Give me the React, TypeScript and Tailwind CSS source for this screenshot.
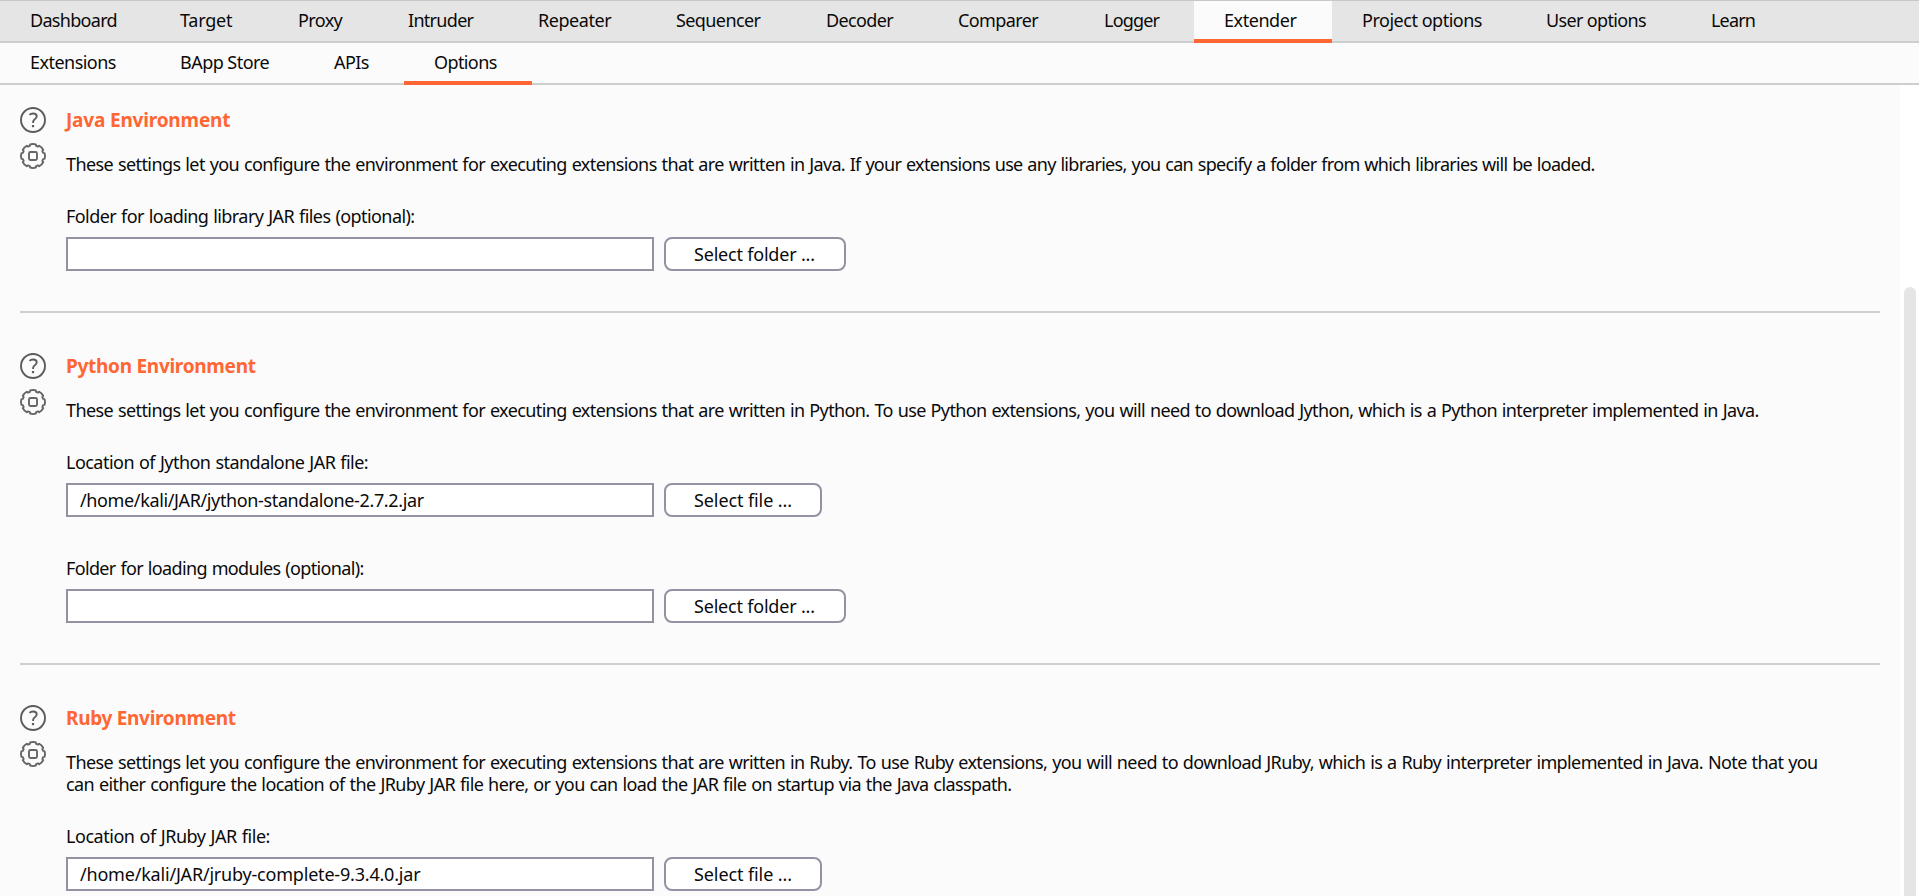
import React from "react";

type Tab = { label: string; width: string; tracking: string; active?: boolean };

const MAIN_TABS: Tab[] = [
  { label: "Dashboard", width: "w-[150px]", tracking: "tracking-[-0.7px]" },
  { label: "Target", width: "w-[118px]", tracking: "tracking-[-0.25px]" },
  { label: "Proxy", width: "w-[110px]", tracking: "tracking-[-0.6px]" },
  { label: "Intruder", width: "w-[130px]", tracking: "tracking-[-0.7px]" },
  { label: "Repeater", width: "w-[138px]", tracking: "tracking-[-0.45px]" },
  { label: "Sequencer", width: "w-[150px]", tracking: "tracking-[-0.6px]" },
  { label: "Decoder", width: "w-[132px]", tracking: "tracking-[-0.65px]" },
  { label: "Comparer", width: "w-[146px]", tracking: "tracking-[-0.6px]" },
  { label: "Logger", width: "w-[120px]", tracking: "tracking-[-0.8px]" },
  { label: "Extender", width: "w-[138px]", tracking: "tracking-[-0.45px]", active: true },
  { label: "Project options", width: "w-[184px]", tracking: "tracking-[-0.48px]" },
  { label: "User options", width: "w-[165px]", tracking: "tracking-[-0.65px]" },
  { label: "Learn", width: "w-[110px]", tracking: "tracking-[-0.85px]" },
];

const SUB_TABS: Tab[] = [
  { label: "Extensions", width: "w-[150px]", tracking: "tracking-[-0.53px]" },
  { label: "BApp Store", width: "w-[154px]", tracking: "tracking-[-0.53px]" },
  { label: "APIs", width: "w-[100px]", tracking: "tracking-[-0.6px]" },
  { label: "Options", width: "w-[128px]", tracking: "tracking-[-0.6px]", active: true },
];

function TabBar({ tabs }: { tabs: Tab[] }) {
  return (
    <nav className="flex h-[42px] shrink-0">
      {tabs.map((t) => (
        <button
          key={t.label}
          className={`${t.width} ${t.tracking} shrink-0 pl-[30px] text-left leading-[22px] whitespace-nowrap ${
            t.active ? "border-b-4 border-[#ff6633] bg-[#fbfbfb]" : "border-b-2 border-[#cccfcf] pb-[2px]"
          }`}
        >
          {t.label}
        </button>
      ))}
      <div className="grow border-b-2 border-[#cccfcf]" />
    </nav>
  );
}

function HelpIcon() {
  return (
    <svg className="size-[26px]" viewBox="0 0 26 26" fill="none" stroke="#5c5c5c" strokeWidth="1.9">
      <circle cx="13" cy="13" r="12" />
      <path d="M9.500 7.900c.8-.9 2-1.400 3.600-1.400 2.300 0 3.600 1 3.600 2.700 0 1.400-.7 2.300-1.900 3.100-1.200.9-1.700 1.500-1.700 2.700v1" />
      <path d="M13 18v2.200" strokeWidth="2.200" />
    </svg>
  );
}

/* Outline of an eight-toothed cog centred on (13, 13). */
const COG = Array.from({ length: 8 }, (_, i) => {
  const point = (deg: number, r: number) => {
    const a = ((i * 45 + deg) * Math.PI) / 180;
    return `${(13 + r * Math.cos(a)).toFixed(2)} ${(13 + r * Math.sin(a)).toFixed(2)}`;
  };
  return `${i ? "L" : "M"}${point(-17, 10.6)}L${point(-14, 11.9)}L${point(0, 12.1)}L${point(14, 11.9)}L${point(17, 10.6)}`;
}).join("");

function GearIcon() {
  return (
    <svg className="size-[26px]" viewBox="0 0 26 26" fill="none" stroke="#666666" strokeWidth="1.900" strokeLinejoin="round">
      <path d={COG + "Z"} />
      <rect x="9" y="9" width="8" height="8" rx="1.5" />
    </svg>
  );
}

type Field = { label: string; labelTracking: string; value: string; valueTracking: string; button: string };

function FieldRow({ field }: { field: Field }) {
  const folder = field.button === "Select folder ...";
  return (
    <div className="mb-10">
      <label className={`${field.labelTracking} mb-[10px] block [word-spacing:0.8px]`}>{field.label}</label>
      <div className="flex gap-[10px]">
        <input
          readOnly
          value={field.value}
          className={`${field.valueTracking} h-[34px] w-[588px] border-2 border-[#9391a2] bg-white px-3 outline-none`}
        />
        <button
          className={`${
            folder ? "w-[182px] tracking-[-0.2px]" : "w-[158px] tracking-[-0.1px]"
          } h-[34px] rounded-lg border-2 border-[#9391a2] bg-white pl-[28px] text-left`}
        >
          {field.button}
        </button>
      </div>
    </div>
  );
}

type SectionProps = {
  title: string;
  titleTracking: string;
  text: string;
  textTracking: string;
  more?: string;
  fields: Field[];
};

function Section({ title, titleTracking, text, textTracking, more, fields }: SectionProps) {
  return (
    <section className="mx-5 border-b-2 border-[#d0d0d0]">
      <div className="flex gap-5">
        <div className="flex w-[26px] flex-col gap-[10px]">
          <HelpIcon />
          <GearIcon />
        </div>
        <div className="grow">
          <h2 className={`${titleTracking} mb-5 text-[19px] leading-[26px] font-bold text-[#ff6633]`}>{title}</h2>
          <p className="mb-[30px] tracking-[-0.597px] whitespace-nowrap [word-spacing:0.8px]">
            These settings let you configure the environment for executing extensions that are written in{" "}
            <span className={textTracking}>{text}</span>
            {more && <span className="block tracking-[-0.605px]">{more}</span>}
          </p>
          {fields.map((f) => (
            <FieldRow key={f.label} field={f} />
          ))}
        </div>
      </div>
    </section>
  );
}

export default function App() {
  return (
    <div className="flex h-[896px] w-[1919px] flex-col overflow-hidden bg-[#fbfbfb] font-['Noto_Sans',sans-serif] text-[18px] leading-[22px] text-[#0a0a0a]">
      <div className="border-t border-[#c8c8c8] bg-[#e5e5e5]">
        <TabBar tabs={MAIN_TABS} />
      </div>
      <TabBar tabs={SUB_TABS} />
      <div className="flex min-h-0 grow">
        <main className="flex w-[1900px] flex-col gap-[40px] overflow-hidden pt-[22px]">
          <Section
            title="Java Environment"
            titleTracking="tracking-[-0.18px]"
            text="Java. If your extensions use any libraries, you can specify a folder from which libraries will be loaded."
            textTracking="tracking-[-0.7px]"
            fields={[
              {
                label: "Folder for loading library JAR files (optional):",
                labelTracking: "tracking-[-0.57px]",
                value: "",
                valueTracking: "tracking-normal",
                button: "Select folder ...",
              },
            ]}
          />
          <Section
            title="Python Environment"
            titleTracking="tracking-[-0.28px]"
            text="Python. To use Python extensions, you will need to download Jython, which is a Python interpreter implemented in Java."
            textTracking="tracking-[-0.62px]"
            fields={[
              {
                label: "Location of Jython standalone JAR file:",
                labelTracking: "tracking-[-0.53px]",
                value: "/home/kali/JAR/jython-standalone-2.7.2.jar",
                valueTracking: "tracking-[-0.37px]",
                button: "Select file ...",
              },
              {
                label: "Folder for loading modules (optional):",
                labelTracking: "tracking-[-0.65px]",
                value: "",
                valueTracking: "tracking-normal",
                button: "Select folder ...",
              },
            ]}
          />
          <Section
            title="Ruby Environment"
            titleTracking="tracking-[-0.3px]"
            text="Ruby. To use Ruby extensions, you will need to download JRuby, which is a Ruby interpreter implemented in Java. Note that you"
            textTracking="tracking-[-0.615px]"
            more="can either configure the location of the JRuby JAR file here, or you can load the JAR file on startup via the Java classpath."
            fields={[
              {
                label: "Location of JRuby JAR file:",
                labelTracking: "tracking-[-0.46px]",
                value: "/home/kali/JAR/jruby-complete-9.3.4.0.jar",
                valueTracking: "tracking-[-0.2px]",
                button: "Select file ...",
              },
            ]}
          />
        </main>
        <div className="flex w-[19px] flex-col bg-white pt-[202px] pl-1">
          <div className="w-3 grow rounded-t-full bg-[#e5e5e5]" />
        </div>
      </div>
    </div>
  );
}
